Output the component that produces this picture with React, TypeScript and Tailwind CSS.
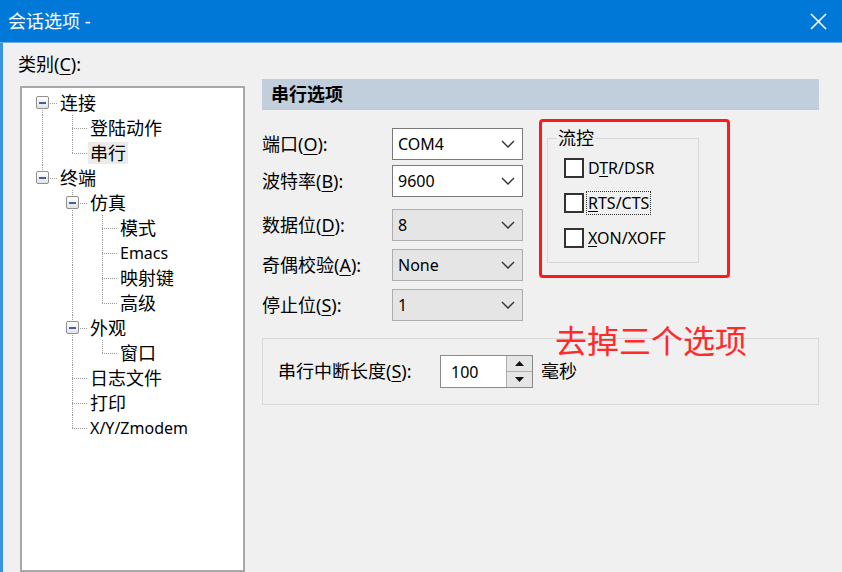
import React from "react";

type TreeNode = {
  label: string;
  depth: number;
  expander?: boolean;
  last?: boolean;
  first?: boolean;
  guides: boolean[];
  selected?: boolean;
  latin?: boolean;
};

const treeRows: TreeNode[] = [
  { label: "连接", depth: 0, expander: true, first: true, guides: [] },
  { label: "登陆动作", depth: 1, guides: [true] },
  { label: "串行", depth: 1, last: true, guides: [true], selected: true },
  { label: "终端", depth: 0, expander: true, last: true, guides: [] },
  { label: "仿真", depth: 1, expander: true, guides: [false] },
  { label: "模式", depth: 2, guides: [false, true] },
  { label: "Emacs", depth: 2, guides: [false, true], latin: true },
  { label: "映射键", depth: 2, guides: [false, true] },
  { label: "高级", depth: 2, last: true, guides: [false, true] },
  { label: "外观", depth: 1, expander: true, guides: [false] },
  { label: "窗口", depth: 2, last: true, guides: [false, true] },
  { label: "日志文件", depth: 1, guides: [false] },
  { label: "打印", depth: 1, guides: [false] },
  { label: "X/Y/Zmodem", depth: 1, last: true, guides: [false], latin: true },
];

const font = "font-['Noto_Sans','Noto_Sans_CJK_SC',sans-serif]";

function Expander() {
  return (
    <div className="relative z-10 flex h-[13px] w-[13px] items-center justify-center rounded-[2px] border border-[#8f8f8f] bg-gradient-to-b from-white to-[#e3e3e3]">
      <div className="h-[2px] w-[7px] bg-[#3d5fae]" />
    </div>
  );
}

function TreeRow({ node }: { node: TreeNode }) {
  return (
    <div className="flex h-[25px] items-stretch">
      {node.guides.map((g, i) => (
        <div key={i} className="flex w-[30px] justify-center">
          {g && <div className="h-full border-l border-dotted border-[#9a9a9a]" />}
        </div>
      ))}
      <div className="relative flex w-[30px] items-center justify-center">
        <div className="absolute left-[15px] top-0 flex h-full flex-col">
          <div className={`h-1/2 border-l border-dotted ${node.first ? "border-transparent" : "border-[#9a9a9a]"}`} />
          <div className={`h-1/2 border-l border-dotted ${node.last ? "border-transparent" : "border-[#9a9a9a]"}`} />
        </div>
        <div className="absolute left-[15px] right-0 top-1/2 border-t border-dotted border-[#9a9a9a]" />
        {node.expander && <Expander />}
      </div>
      <div className="ml-[1px] flex items-center">
        <span
          className={`px-[2px] leading-[22px] text-black ${node.latin ? "text-[16px]" : "text-[18px]"} ${
            node.selected ? "bg-[#ebebeb]" : ""
          }`}
        >
          {node.label}
        </span>
      </div>
    </div>
  );
}

function Chevron() {
  return (
    <svg width="14" height="8" viewBox="0 0 14 8" className="shrink-0">
      <polyline points="1,1 7,7 13,1" fill="none" stroke="#333" strokeWidth="1.4" />
    </svg>
  );
}

function Combo({ value, disabled, mt }: { value: string; disabled?: boolean; mt: string }) {
  return (
    <div
      className={`${mt} flex h-[32px] w-[131px] items-center justify-between border pl-[5px] pr-[7px] ${
        disabled ? "border-[#adadad] bg-[#e5e5e5]" : "border-[#7a7a7a] bg-white"
      }`}
    >
      <span className="text-[16px] text-black">{value}</span>
      <Chevron />
    </div>
  );
}

function Label({ text, k, mt }: { text: string; k: string; mt: string }) {
  return (
    <div className={`${mt} flex h-[32px] items-center text-[18px] text-black`}>
      {text}(<span className="underline underline-offset-[3px]">{k}</span>):
    </div>
  );
}

function Check({ pre, k, post, focus }: { pre: string; k: string; post: string; focus?: boolean }) {
  return (
    <div className="flex items-center">
      <div className="h-[20px] w-[20px] border-2 border-[#333] bg-white" />
      <span
        className={`ml-[3px] px-[1px] text-[16px] leading-[22px] text-black ${
          focus ? "outline outline-1 outline-dotted outline-[#333]" : ""
        }`}
      >
        {pre}
        <span className="underline underline-offset-[2px]">{k}</span>
        {post}
      </span>
    </div>
  );
}

function Spin() {
  return (
    <div className="flex h-[33px] w-[93px] border border-[#8a8a8a] bg-[#e5e5e5]">
      <div className="flex flex-1 items-center border-r border-[#adadad] bg-white pl-[10px] text-[16px] text-black">
        100
      </div>
      <div className="flex w-[25px] flex-col">
        <div className="flex flex-1 items-center justify-center border-b border-[#adadad]">
          <svg width="9" height="5" viewBox="0 0 9 5">
            <polygon points="0,5 4.5,0 9,5" fill="#111" />
          </svg>
        </div>
        <div className="flex flex-1 items-center justify-center">
          <svg width="9" height="5" viewBox="0 0 9 5">
            <polygon points="0,0 4.5,5 9,0" fill="#111" />
          </svg>
        </div>
      </div>
    </div>
  );
}

export default function App() {
  return (
    <div className={`relative flex h-[572px] w-[842px] flex-col overflow-hidden bg-[#f0f0f0] ${font}`}>
      <div className="flex h-[43px] shrink-0 items-center justify-between border-b border-[#6aaee8] bg-[#0078d7] pl-[8px] pr-[15px] text-white">
        <span className="text-[18px]">会话选项 -</span>
        <svg width="17" height="17" viewBox="0 0 17 17">
          <line x1="1" y1="1" x2="16" y2="16" stroke="white" strokeWidth="1.6" />
          <line x1="16" y1="1" x2="1" y2="16" stroke="white" strokeWidth="1.6" />
        </svg>
      </div>

      <div className="flex flex-1 border-l-[3px] border-[#3a93e0]">
        <div className="ml-[17px] flex w-[225px] flex-col">
          <div className="-ml-[2px] mt-[9px] h-[24px] text-[18px] leading-[24px] text-black">
            类别(<span className="underline underline-offset-[3px]">C</span>):
          </div>
          <div className="mt-[10px] flex-1 border-2 border-[#a8a8a8] bg-white pl-[5px] pt-[2px]">
            {treeRows.map((n) => (
              <TreeRow key={n.label} node={n} />
            ))}
          </div>
        </div>

        <div className="ml-[17px] flex w-[557px] flex-col pt-[36px]">
          <div className="flex h-[31px] items-center bg-[#c1cedb] px-[9px] text-[18px] font-bold text-black">
            串行选项
          </div>

          <div className="flex items-start">
            <div className="flex">
              <div className="flex w-[130px] flex-col">
                <Label text="端口" k="O" mt="mt-[18px]" />
                <Label text="波特率" k="B" mt="mt-[5px]" />
                <Label text="数据位" k="D" mt="mt-[12px]" />
                <Label text="奇偶校验" k="A" mt="mt-[8px]" />
                <Label text="停止位" k="S" mt="mt-[8px]" />
              </div>
              <div className="flex flex-col">
                <Combo value="COM4" mt="mt-[18px]" />
                <Combo value="9600" mt="mt-[5px]" />
                <Combo value="8" disabled mt="mt-[12px]" />
                <Combo value="None" disabled mt="mt-[8px]" />
                <Combo value="1" disabled mt="mt-[8px]" />
              </div>
            </div>

            <div className="ml-[16px] mt-[9px] h-[159px] w-[191px] rounded-[4px] border-[3px] border-[#ff1a1a] pl-[5px] pt-[16px]">
              <div className="relative h-[125px] w-[152px] border border-[#d8d8d8]">
                <span className="absolute -top-[13px] left-[8px] bg-[#f0f0f0] px-[2px] text-[18px] leading-[24px] text-black">
                  流控
                </span>
                <div className="flex flex-col gap-[13px] pl-[16px] pt-[18px]">
                  <Check pre="D" k="T" post="R/DSR" />
                  <Check pre="" k="R" post="TS/CTS" focus />
                  <Check pre="" k="X" post="ON/XOFF" />
                </div>
              </div>
            </div>
          </div>

          <div className="mt-[17px] flex h-[67px] items-center border border-[#d9d9d9] pl-[15px]">
            <div className="w-[162px] text-[18px] text-black">
              串行中断长度(<span className="underline underline-offset-[3px]">S</span>):
            </div>
            <Spin />
            <span className="ml-[8px] text-[18px] text-black">毫秒</span>
          </div>
        </div>
      </div>

      <div className="absolute left-[555px] top-[323px] text-[32px] leading-[36px] text-[#ff2a2a]">
        去掉三个选项
      </div>
    </div>
  );
}
